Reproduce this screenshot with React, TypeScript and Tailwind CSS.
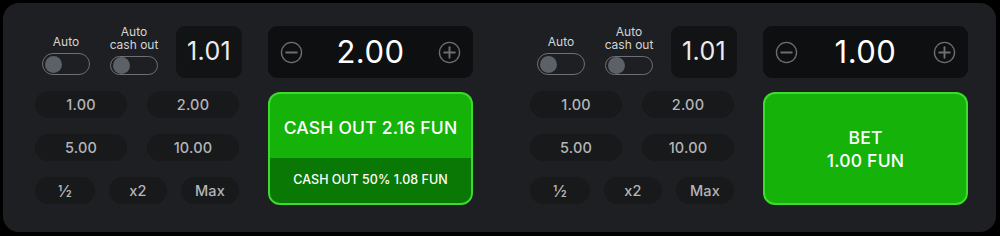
import React from "react";

const font = { fontFamily: "Inter, 'Noto Sans', sans-serif" };

const Toggle: React.FC<{ label: React.ReactNode }> = ({ label }) => (
  <div className="flex flex-col items-center justify-end w-[48px] h-[52px] pb-[3px]">
    <div className="text-[12px] leading-[13px] text-[#d4d4d6] text-center whitespace-nowrap mb-[5px]">
      {label}
    </div>
    <div className="w-[48px] h-[22px] rounded-full border-[1.5px] border-[#6c6f75] flex items-center px-[1.5px]">
      <div className="w-[17px] h-[17px] rounded-full bg-[#5c6167]" />
    </div>
  </div>
);

const Chip: React.FC<{ children: React.ReactNode; className?: string }> = ({ children, className }) => (
  <div
    className={
      "h-[27px] rounded-full bg-[#18191b] flex items-center justify-center text-[14.5px] font-medium text-[#b4b5b8] tracking-[0.2px] " +
      (className ?? "")
    }
  >
    {children}
  </div>
);

const CircleIcon: React.FC<{ plus?: boolean }> = ({ plus }) => (
  <svg width="23" height="23" viewBox="0 0 24 24" fill="none" stroke="#6d6e72" strokeWidth="1.4">
    <circle cx="12" cy="12" r="10.5" />
    <line x1="6.5" y1="12" x2="17.5" y2="12" strokeWidth="2" strokeLinecap="round" />
    {plus && <line x1="12" y1="6.5" x2="12" y2="17.5" strokeWidth="2" strokeLinecap="round" />}
  </svg>
);

const Controls: React.FC = () => (
  <div className="w-[208px] flex flex-col gap-[13px]">
    <div className="flex items-start h-[52px]">
      <div className="ml-[7px]">
        <Toggle label="Auto" />
      </div>
      <div className="ml-[20px]">
        <Toggle
          label={
            <>
              Auto
              <br />
              cash out
            </>
          }
        />
      </div>
      <div className="ml-[18px] w-[66px] h-[52px] rounded-[9px] bg-[#121315] flex items-center justify-center text-[25px] text-[#ececec] tracking-[0.3px]">
        1.01
      </div>
    </div>
    <div className="flex flex-col gap-[16px]">
      <div className="flex gap-[20px]">
        <Chip className="w-[92px]">1.00</Chip>
        <Chip className="w-[92px]">2.00</Chip>
      </div>
      <div className="flex gap-[20px]">
        <Chip className="w-[92px]">5.00</Chip>
        <Chip className="w-[92px]">10.00</Chip>
      </div>
      <div className="flex gap-[14px]">
        <Chip className="w-[60px] text-[16px]">½</Chip>
        <Chip className="w-[58px]">x2</Chip>
        <Chip className="w-[58px]">Max</Chip>
      </div>
    </div>
  </div>
);

const Amount: React.FC<{ value: string }> = ({ value }) => (
  <div className="h-[52px] rounded-[9px] bg-[#0e0f11] flex items-center justify-between px-[12px]">
    <CircleIcon />
    <span className="text-[31px] text-white tracking-[0.5px]">{value}</span>
    <CircleIcon plus />
  </div>
);

const Half: React.FC<{ value: string; cashout?: boolean }> = ({ value, cashout }) => (
  <div className="flex gap-[25px]">
    <Controls />
    <div className="w-[205px] flex flex-col gap-[14px]">
      <Amount value={value} />
      {cashout ? (
        <div className="h-[113px] rounded-[12px] border-2 border-[#3bdc2b] bg-[#15b20a] overflow-hidden flex flex-col text-white">
          <div className="flex-1 flex items-center justify-center pt-[4px] text-[17.5px] font-medium tracking-[0.2px]">
            CASH OUT 2.16 FUN
          </div>
          <div className="h-[45px] bg-[#0a7804] flex items-center justify-center text-[12.5px] font-medium">
            CASH OUT 50% 1.08 FUN
          </div>
        </div>
      ) : (
        <div className="h-[113px] rounded-[12px] border-2 border-[#3bdc2b] bg-[#15b20a] flex flex-col items-center justify-center text-white text-[17.5px] font-medium leading-[23px] tracking-[0.2px]">
          <span>BET</span>
          <span>1.00 FUN</span>
        </div>
      )}
    </div>
  </div>
);

export default function App() {
  return (
    <div className="w-[1000px] h-[236px] bg-black p-[3px]" style={font}>
      <div className="w-[993px] h-[229px] rounded-[16px] bg-[#1e1f22] flex gap-[57px] pl-[32px] pt-[23px]">
        <Half value="2.00" cashout />
        <Half value="1.00" />
      </div>
    </div>
  );
}
